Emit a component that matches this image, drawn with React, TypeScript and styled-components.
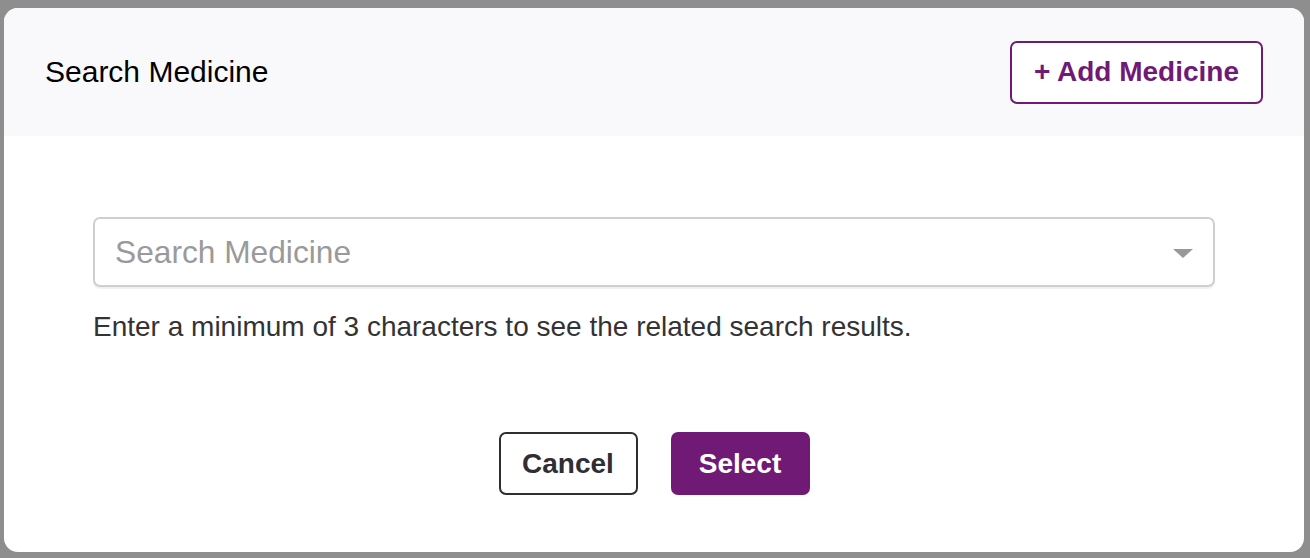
import React from 'react'
import styled, { createGlobalStyle } from 'styled-components'

const GlobalStyle = createGlobalStyle`
  html, body {
    margin: 0;
    padding: 0;
    background: #8e8e8e;
    font-family: "Liberation Sans", Arial, Helvetica, sans-serif;
  }
  * { box-sizing: border-box; }
`

const Backdrop = styled.div`
  width: 1310px;
  height: 558px;
  padding: 8px 6px 6px 4px;
  background: #8e8e8e;
`

const Modal = styled.div`
  width: 1300px;
  height: 544px;
  background: #ffffff;
  border-radius: 14px;
  overflow: hidden;
  display: flex;
  flex-direction: column;
`

const Header = styled.div`
  height: 128px;
  flex-shrink: 0;
  background: #f9f9fb;
  display: flex;
  align-items: center;
  justify-content: space-between;
  padding: 0 41px;
`

const Title = styled.h2`
  margin: 0;
  font-size: 30px;
  font-weight: 400;
  color: #000;
`

const OutlineButton = styled.button<{ $color: string }>`
  height: 63px;
  padding: 0 22px;
  border: 2px solid ${p => p.$color};
  border-radius: 7px;
  background: #fff;
  color: ${p => p.$color};
  font-family: inherit;
  font-size: 28px;
  font-weight: 700;
  cursor: pointer;
`

const Body = styled.div`
  flex: 1;
  display: flex;
  flex-direction: column;
  padding: 81px 89px 0;
`

const SelectBox = styled.div`
  height: 70px;
  border: 2px solid #cfcfcf;
  border-radius: 7px;
  box-shadow: 0 2px 1px rgba(0, 0, 0, 0.06);
  display: flex;
  align-items: center;
  justify-content: space-between;
  padding: 0 20px 0 20px;
`

const Placeholder = styled.span`
  font-size: 31.7px;
  color: #9a9a9a;
`

const Caret = styled.span`
  width: 0;
  height: 0;
  border-left: 10px solid transparent;
  border-right: 10px solid transparent;
  border-top: 9px solid #999;
  margin-top: 2px;
`

const Hint = styled.p`
  margin: 24px 0 0;
  font-size: 28px;
  color: #333;
`

const Actions = styled.div`
  display: flex;
  justify-content: center;
  gap: 33px;
  margin-top: 89px;
`

const ActionButton = styled.button<{ $primary?: boolean }>`
  width: 139px;
  height: 63px;
  border-radius: 7px;
  border: 2px solid ${p => (p.$primary ? '#701a75' : '#2f2f33')};
  background: ${p => (p.$primary ? '#701a75' : '#fff')};
  color: ${p => (p.$primary ? '#fff' : '#2f2f33')};
  font-family: inherit;
  font-size: 28px;
  font-weight: 700;
  cursor: pointer;
`

export default function App() {
  return (
    <>
      <GlobalStyle />
      <Backdrop>
        <Modal>
          <Header>
            <Title>Search Medicine</Title>
            <OutlineButton $color="#701a75">+ Add Medicine</OutlineButton>
          </Header>
          <Body>
            <SelectBox>
              <Placeholder>Search Medicine</Placeholder>
              <Caret />
            </SelectBox>
            <Hint>Enter a minimum of 3 characters to see the related search results.</Hint>
            <Actions>
              <ActionButton>Cancel</ActionButton>
              <ActionButton $primary>Select</ActionButton>
            </Actions>
          </Body>
        </Modal>
      </Backdrop>
    </>
  )
}
